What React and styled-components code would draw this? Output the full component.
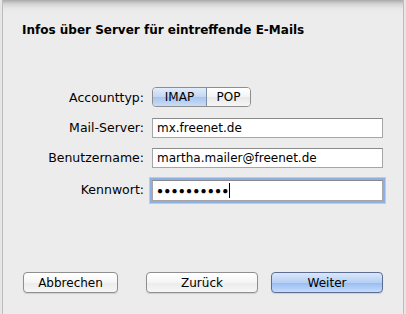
import React from 'react';
import styled, { createGlobalStyle } from 'styled-components';

const GlobalStyle = createGlobalStyle`
  html, body {
    margin: 0;
    padding: 0;
    background: #e6e6e6;
  }
  body {
    font-family: "DejaVu Sans", "Liberation Sans", sans-serif;
    font-size: 12px;
    color: #000000;
  }
`;

const Window = styled.div`
  box-sizing: border-box;
  height: 314px;
  margin: 0 2px 0 2px;
  border-left: 1px solid #bdbdbd;
  border-right: 1px solid #bdbdbd;
  background: linear-gradient(to bottom, #a9a9a9 0px, #d4d4d4 4px, #e9e9e9 9px, #ececec 14px);
  display: flex;
  flex-direction: column;
  padding: 22px 19px 0 19px;
`;

const Title = styled.div`
  font-weight: bold;
  font-size: 12px;
  line-height: 16px;
`;

const Form = styled.div`
  display: grid;
  grid-template-columns: 123px 231px;
  column-gap: 7px;
  row-gap: 10px;
  margin-top: 49px;
  align-items: center;
`;

const Label = styled.div`
  text-align: right;
  line-height: 20px;
  font-size: 12.5px;
  padding-right: 1px;
`;

const Segmented = styled.div`
  display: flex;
  width: 99px;
  height: 20px;
  box-sizing: border-box;
  border: 1px solid #8e8e8e;
  border-radius: 4px;
  overflow: hidden;
  margin-bottom: 1px;
`;

const Segment = styled.div`
  flex: ${p => (p.wide ? '0 0 53px' : '1')};
  display: flex;
  align-items: center;
  justify-content: center;
  border-right: ${p => (p.wide ? '1px solid #7f8ea8' : 'none')};
  background: ${p =>
    p.active
      ? 'linear-gradient(to bottom, #e3ecfa 0%, #c2d6f3 50%, #a9c4ee 52%, #cadcf7 100%)'
      : 'linear-gradient(to bottom, #ffffff 0%, #f4f4f4 50%, #e9e9e9 52%, #f6f6f6 100%)'};
`;

const Field = styled.div`
  box-sizing: border-box;
  height: ${p => (p.focused ? '21px' : '20px')};
  background: #ffffff;
  border: 1px solid #a6a6a6;
  border-top-color: #8a8a8a;
  padding: 0 4px;
  display: flex;
  align-items: center;
  box-shadow: ${p => (p.focused ? '0 0 0 2px #8db0e4, 0 0 0 3px #b9cdea' : 'none')};
  margin-top: ${p => (p.focused ? '2px' : '0')};
`;

const Dots = styled.span`
  font-family: "Liberation Sans", sans-serif;
  font-size: 10px;
  letter-spacing: 1.2px;
  margin-right: -1px;
`;

const Caret = styled.span`
  display: inline-block;
  width: 1px;
  height: 15px;
  background: #000000;
  margin-left: 1px;
`;

const Buttons = styled.div`
  display: flex;
  justify-content: space-between;
  margin-top: auto;
  margin-bottom: 21px;
  padding-left: 1px;
`;

const Group = styled.div`
  display: flex;
  gap: 13px;
  margin-right: 1px;
`;

const Button = styled.div`
  box-sizing: border-box;
  width: ${p => p.width}px;
  height: 21px;
  border: 1px solid ${p => (p.primary ? '#5d6e94' : '#8f8f8f')};
  border-radius: 4px;
  display: flex;
  align-items: center;
  justify-content: center;
  box-shadow: 0 1px 1px rgba(0, 0, 0, 0.12);
  background: ${p =>
    p.primary
      ? 'linear-gradient(to bottom, #dbe7fb 0%, #b6cff4 50%, #98bcf1 52%, #c6dcfb 100%)'
      : 'linear-gradient(to bottom, #ffffff 0%, #f5f5f5 50%, #ebebeb 52%, #f7f7f7 100%)'};
`;

function App() {
  return (
    <>
      <GlobalStyle />
      <Window>
        <Title>Infos über Server für eintreffende E-Mails</Title>
        <Form>
          <Label>Accounttyp:</Label>
          <Segmented>
            <Segment wide active>IMAP</Segment>
            <Segment>POP</Segment>
          </Segmented>
          <Label>Mail-Server:</Label>
          <Field>mx.freenet.de</Field>
          <Label>Benutzername:</Label>
          <Field>martha.mailer@freenet.de</Field>
          <Label>Kennwort:</Label>
          <Field focused>
            <Dots>●●●●●●●●●●</Dots>
            <Caret />
          </Field>
        </Form>
        <Buttons>
          <Button width={95}>Abbrechen</Button>
          <Group>
            <Button width={112}>Zurück</Button>
            <Button width={112} primary>Weiter</Button>
          </Group>
        </Buttons>
      </Window>
    </>
  );
}

export default App;
